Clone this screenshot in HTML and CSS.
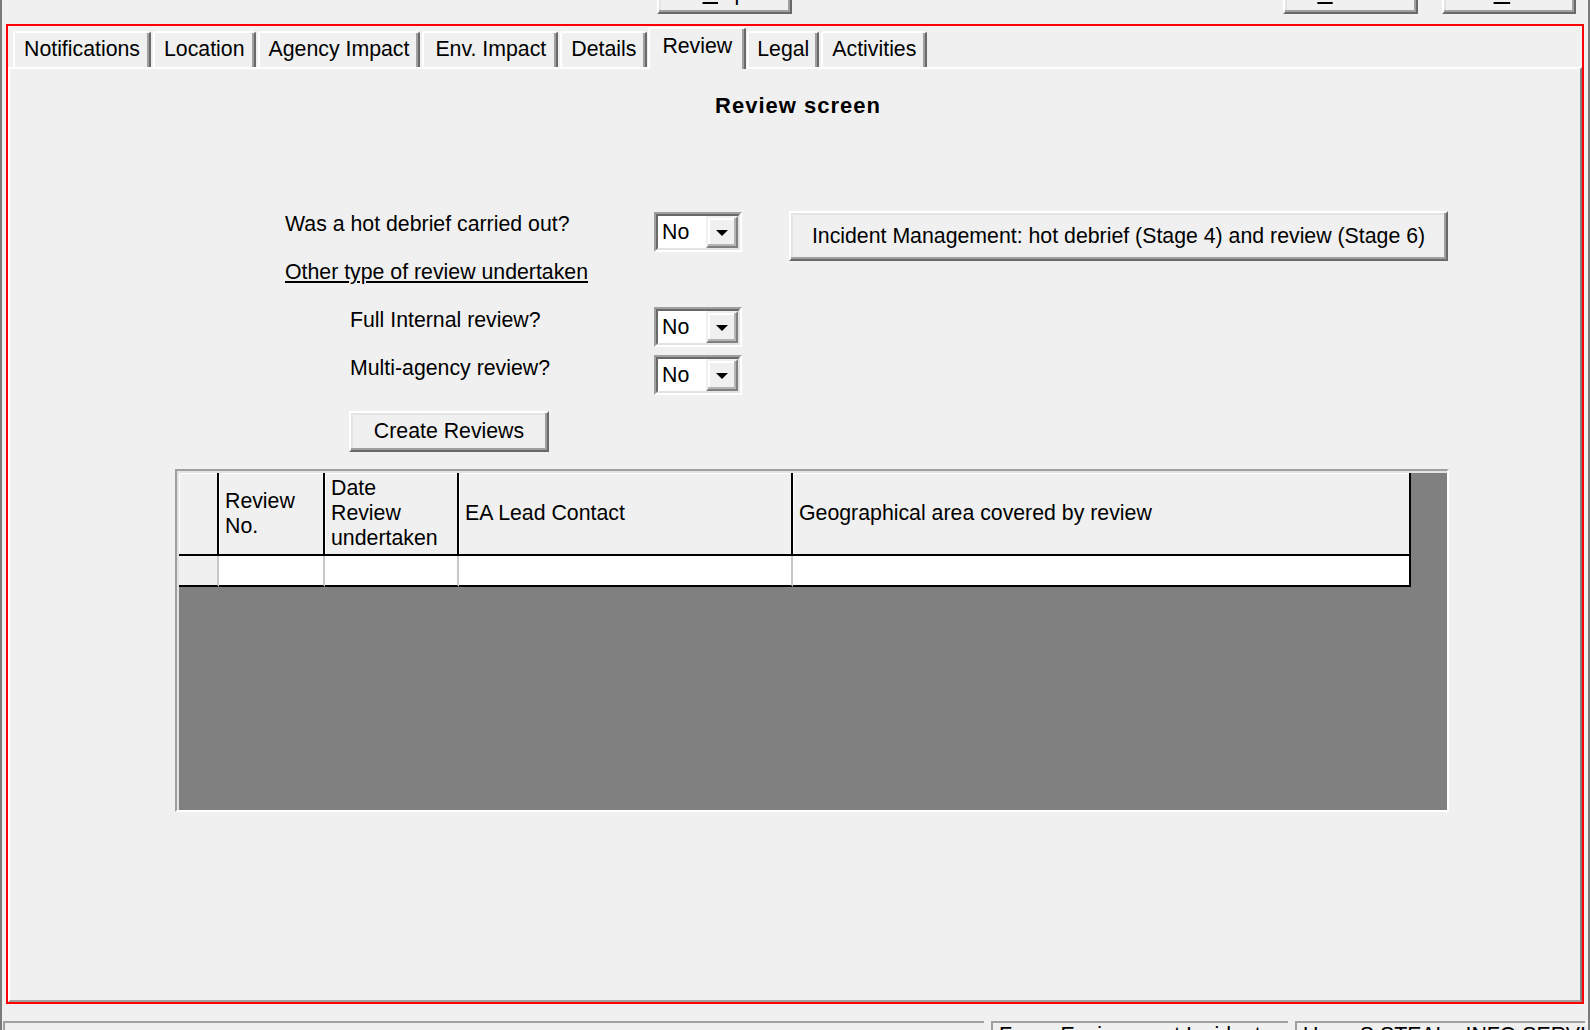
FILE: index.html
```html
<!DOCTYPE html>
<html lang="en">
<head>
<meta charset="utf-8">
<title>Review screen</title>
<link rel="stylesheet" href="styles.css">
</head>
<body>
<div class="window">
  <div class="topbar">
    <div class="btn top-btn help"><span><u>H</u>elp</span></div>
    <div class="btn top-btn cancel"><span><u>C</u>ancel</span></div>
    <div class="btn top-btn ok"><span><u>O</u>K</span></div>
  </div>

  <div class="frame">
    <div class="tabs">
      <div class="tab">Notifications</div>
      <div class="tab">Location</div>
      <div class="tab">Agency Impact</div>
      <div class="tab tab-env">Env. Impact</div>
      <div class="tab">Details</div>
      <div class="tab active">Review</div>
      <div class="tab tab-legal">Legal</div>
      <div class="tab">Activities</div>
    </div>

    <div class="panel">
      <h1 class="title">Review screen</h1>

      <div class="form">
        <div class="row row-1">
          <div class="label label-wide">Was a hot debrief carried out?</div>
          <div class="combo">
            <div class="combo-inner">
              <div class="combo-value">No</div>
              <div class="combo-btn"><span class="arrow"></span></div>
            </div>
          </div>
          <div class="btn btn-incident">Incident Management: hot debrief (Stage 4) and review (Stage 6)</div>
        </div>

        <div class="row row-2">
          <div class="label link">Other type of review undertaken</div>
        </div>

        <div class="row row-3">
          <div class="label label-indent">Full Internal review?</div>
          <div class="combo">
            <div class="combo-inner">
              <div class="combo-value">No</div>
              <div class="combo-btn"><span class="arrow"></span></div>
            </div>
          </div>
        </div>

        <div class="row row-4">
          <div class="label label-indent">Multi-agency review?</div>
          <div class="combo">
            <div class="combo-inner">
              <div class="combo-value">No</div>
              <div class="combo-btn"><span class="arrow"></span></div>
            </div>
          </div>
        </div>

        <div class="row row-5">
          <div class="btn btn-create">Create Reviews</div>
        </div>
      </div>

      <div class="grid">
        <div class="grid-table">
          <div class="cell head sel"></div>
          <div class="cell head">Review<br>No.</div>
          <div class="cell head">Date<br>Review<br>undertaken</div>
          <div class="cell head">EA Lead Contact</div>
          <div class="cell head">Geographical area covered by review</div>

          <div class="cell data sel"></div>
          <div class="cell data"></div>
          <div class="cell data"></div>
          <div class="cell data"></div>
          <div class="cell data last"></div>
        </div>
      </div>
    </div>
  </div>

  <div class="statusbar">
    <div class="status status-1"></div>
    <div class="status status-2">Form: Environment Incident</div>
    <div class="status status-3">User: S.STEAL - INFO SERVICES</div>
  </div>
</div>
</body>
</html>
```

FILE: styles.css
```css
html, body {
  margin: 0;
  padding: 0;
  background: #f0f0f0;
}

body {
  font-family: "Liberation Sans", Arial, sans-serif;
  font-size: 21.3px;
  color: #000;
}

.window {
  width: 1590px;
  height: 1030px;
  box-sizing: border-box;
  border-left: 2px solid #7a7a7a;
  border-right: 2px solid #7a7a7a;
  background: #f0f0f0;
  overflow: hidden;
  display: flex;
  flex-direction: column;
}

/* ---------- top buttons (cut off by the window top) ---------- */
.topbar {
  height: 24px;
  box-sizing: border-box;
  padding-bottom: 10px;
  display: flex;
  align-items: flex-end;
  flex-shrink: 0;
}

.btn {
  box-sizing: border-box;
  display: flex;
  align-items: center;
  justify-content: center;
  background: #f0f0f0;
  border: 2px solid;
  border-color: #ffffff #696969 #696969 #ffffff;
  box-shadow: inset -2px -2px 0 #a0a0a0, inset 2px 2px 0 #e3e3e3;
  line-height: 25px;
  white-space: nowrap;
  flex-shrink: 0;
}

.top-btn {
  height: 42px;
  width: 135px;
}

.help { margin-left: 655px; }
.cancel { margin-left: 491px; }
.ok { margin-left: 24px; width: 134px; }

/* ---------- red highlighted frame ---------- */
.frame {
  margin-left: 4px;
  width: 1578px;
  height: 980px;
  box-sizing: border-box;
  border: 2px solid #ff0000;
  display: flex;
  flex-direction: column;
  flex-shrink: 0;
}

.tabs {
  height: 41px;
  flex-shrink: 0;
  display: flex;
  align-items: flex-end;
  gap: 2px;
  padding-left: 5px;
  position: relative;
  z-index: 1;
}

.tab {
  height: 36px;
  box-sizing: border-box;
  padding: 4px 9px 0;
  border-top: 2px solid #ffffff;
  border-left: 2px solid #ffffff;
  border-right: 2px solid #696969;
  border-top-left-radius: 3px;
  border-top-right-radius: 3px;
  box-shadow: inset -2px 0 0 #a0a0a0;
  background: #f0f0f0;
  line-height: 25px;
  white-space: nowrap;
}

.tab-env { padding: 4px 10px 0 11px; }
.tab-legal { padding: 4px 8px 0; }

.tab.active {
  height: 42px;
  margin: 0 -1px -2px;
  padding: 5px 12px 0;
}

.panel {
  flex: 1;
  box-sizing: border-box;
  border-top: 2px solid #ffffff;
  border-left: 2px solid #ffffff;
  border-right: 2px solid #808080;
  border-bottom: 2px solid #a0a0a0;
}

.title {
  margin: 24px 0 0;
  padding-left: 6px;
  text-align: center;
  font-size: 22px;
  font-weight: bold;
  letter-spacing: 1px;
  line-height: 26px;
}

/* ---------- form ---------- */
.form {
  margin: 93px 0 0 275px;
}

.row {
  display: flex;
  align-items: flex-start;
}

.row-1 { height: 48px; }
.row-2 { height: 25px; }
.row-3 { height: 40px; margin-top: 22px; }
.row-4 { height: 40px; margin-top: 8px; }
.row-5 { margin-top: 16px; }

.label {
  line-height: 25px;
  white-space: nowrap;
}

.label-wide { width: 369px; }

.label-indent {
  margin-left: 65px;
  margin-top: 1px;
  width: 304px;
}

.link {
  text-decoration: underline;
  text-underline-offset: 2px;
}

.combo {
  width: 88px;
  height: 40px;
  box-sizing: border-box;
  border: 2px solid;
  border-color: #a0a0a0 #ffffff #ffffff #a0a0a0;
  flex-shrink: 0;
}

.combo-inner {
  height: 100%;
  box-sizing: border-box;
  border: 2px solid;
  border-color: #696969 #e3e3e3 #e3e3e3 #696969;
  background: #ffffff;
  display: flex;
}

.combo-value {
  flex: 1;
  padding-left: 4px;
  line-height: 32px;
}

.combo-btn {
  width: 32px;
  box-sizing: border-box;
  border: 2px solid;
  border-color: #f0f0f0 #808080 #808080 #f0f0f0;
  box-shadow: inset -2px -2px 0 #b4b4b4, inset 2px 2px 0 #ffffff;
  background: #f0f0f0;
  display: flex;
  align-items: center;
  justify-content: center;
}

.arrow {
  width: 0;
  height: 0;
  border-left: 6px solid transparent;
  border-right: 6px solid transparent;
  border-top: 6px solid #000;
  margin-top: 1px;
}

.btn-incident {
  width: 659px;
  height: 50px;
  margin-left: 47px;
  margin-top: -1px;
}

.btn-create {
  width: 200px;
  height: 41px;
  margin-left: 64px;
}

/* ---------- data grid ---------- */
.grid {
  margin: 17px 0 0 165px;
  width: 1274px;
  height: 343px;
  box-sizing: border-box;
  border: 2px solid;
  border-color: #a0a0a0 #ffffff #ffffff #a0a0a0;
  box-shadow: inset 2px 2px 0 #e3e3e3;
  background: #808080;
  padding: 2px 0 0 2px;
}

.grid-table {
  display: grid;
  grid-template-columns: 40px 106px 134px 334px 618px;
  grid-template-rows: 83px 31px;
  width: 1232px;
}

.cell {
  box-sizing: border-box;
  border-right: 2px solid #000;
  border-bottom: 2px solid #000;
}

.head {
  background: #f0f0f0;
  display: flex;
  align-items: center;
  padding-left: 6px;
  line-height: 25px;
  box-shadow: inset 1px 1px 0 #ffffff;
}

.head.sel { padding-left: 0; }

.data {
  background: #ffffff;
  border-right-color: #c8c8c8;
}

.data.sel { background: #f0f0f0; }
.data.last { border-right-color: #000; }

/* ---------- status bar ---------- */
.statusbar {
  flex: 1;
  display: flex;
  gap: 7px;
  margin-top: 17px;
  padding-left: 1px;
}

.status {
  box-sizing: border-box;
  border-top: 2px solid #a0a0a0;
  border-left: 2px solid #a0a0a0;
  padding-left: 6px;
  line-height: 25px;
  white-space: nowrap;
  overflow: hidden;
}

.status-1 { width: 981px; }
.status-2 { width: 297px; }
.status-3 { width: 290px; }
```
